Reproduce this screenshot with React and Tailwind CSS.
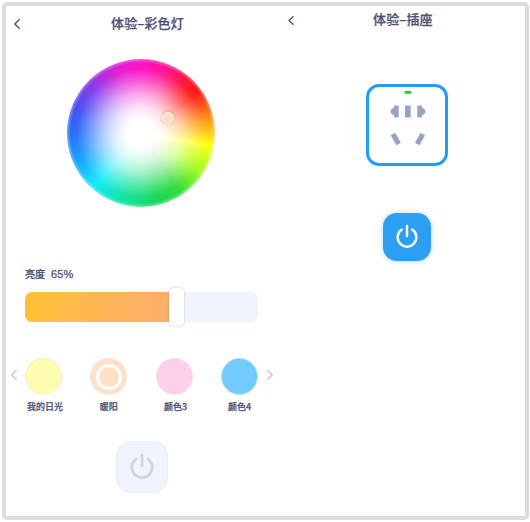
const CJK = "font-['Noto_Sans_CJK_SC',sans-serif]";

function Chevron({ className, right = false, width = 1.5 }) {
  return (
    <svg viewBox="0 0 6 10" className={className} fill="none" stroke="currentColor" strokeWidth={width} strokeLinecap="round" strokeLinejoin="round">
      <path d={right ? "M0.8 0.8 5.2 5 0.8 9.2" : "M5.2 0.8 0.8 5 5.2 9.2"} />
    </svg>
  );
}

function PowerIcon({ className }) {
  return (
    <svg viewBox="0 0 24 26" className={className} fill="none" stroke="currentColor" strokeWidth="2.7" strokeLinecap="round">
      <path d="M12 2v11" />
      <path d="M6.3 6A10.2 10.2 0 1 0 17.7 6" />
    </svg>
  );
}

function ColorWheel() {
  return (
    <div className="relative mt-[17px] mr-[1px] size-[148px] shrink-0 self-center">
      <div className="size-full rounded-full blur-[0.6px] bg-[radial-gradient(circle_closest-side,#fff_0%,#fff_19%,rgba(255,255,255,0.86)_36%,rgba(255,255,255,0.6)_54%,rgba(255,255,255,0.25)_73%,rgba(255,255,255,0.03)_86%,rgba(255,255,255,0)_95%,rgba(255,255,255,0.35)_100%),conic-gradient(#ff10c8_0deg,#ff1289_24deg,#ff1720_46deg,#ff1d15_55deg,#ff9218_78deg,#ffff16_100deg,#9cfb22_124deg,#2fdc3c_147deg,#16d852_165deg,#12e4a0_195deg,#14eafa_222deg,#169dff_248deg,#2670fb_270deg,#4b50f5_292deg,#8c38e8_315deg,#e31cd2_340deg,#ff10c8_360deg)]" />
      <span className="absolute left-[95px] top-[53px] size-[12px] rounded-full border-[1.5px] border-[#fff8f4] bg-[#fddcc5] shadow-[0_0_3px_rgba(140,80,60,0.4)]" />
    </div>
  );
}

function Swatch({ color, label, selected, shift = "" }) {
  return (
    <div className="flex w-[37px] flex-col items-center">
      <div className={`flex size-[37px] items-center justify-center rounded-full border border-[#e8e8e8]/60 ${color}`}>
        {selected && <span className="size-[26px] rounded-full border-[3px] border-white" />}
      </div>
      <span className={`mt-[5px] whitespace-nowrap text-[9px] leading-[13px] font-medium ${shift}`}>{label}</span>
    </div>
  );
}

function LampScreen() {
  return (
    <section className="flex w-[270px] shrink-0 flex-col pr-[18px] pl-[19px]">
      <header className="-ml-[12px] mt-[7px] flex h-[20px] items-center">
        <Chevron className="mt-[2px] ml-[1px] h-[10px] w-[6px]" />
        <h1 className="ml-[91px] whitespace-nowrap text-[13px] leading-[20px] font-medium tracking-[0.15px]">体验–彩色灯</h1>
      </header>
      <div className="flex flex-col pt-[9px]">
        <ColorWheel />
      </div>
      <div className="mt-[59px] flex h-[16px] items-center text-[10px] leading-[16px] font-medium">
        <span>亮度</span>
        <span className="ml-[6px] font-['Liberation_Sans',sans-serif] text-[11px] tracking-[0.1px]">65%</span>
      </div>
      <div className="mt-[6px] flex h-[38px] items-center">
        <div className="h-[30px] w-[144px] rounded-l-[7px] bg-gradient-to-r from-[#ffc02f] to-[#fead6a]" />
        <div className="z-10 h-[38px] w-[15px] rounded-[4px] bg-white shadow-[0_0_2px_rgba(80,90,130,0.45)]" />
        <div className="h-[30px] flex-1 rounded-r-[7px] bg-[#f0f4fd]" />
      </div>
      <div className="mt-[32px] -mr-[15px] -ml-[14px] flex items-start">
        <Chevron width={1.3} className="mt-[12px] h-[10px] w-[6px] text-[#c3c5ca]" />
        <div className="ml-[8px] flex w-[233px] justify-between">
          <Swatch color="bg-[#fffdb0]" label="我的日光" shift="ml-[3px]" />
          <Swatch color="bg-[#ffe0c8]" label="暖阳" selected />
          <Swatch color="bg-[#ffd1e8]" label="颜色3" shift="ml-[3px]" />
          <Swatch color="bg-[#71cbff]" label="颜色4" />
        </div>
        <Chevron right width={1.3} className="mt-[12px] ml-[9px] h-[10px] w-[6px] text-[#c3c5ca]" />
      </div>
      <button className="mt-[28px] flex size-[52px] items-center justify-center self-center rounded-[15px] border border-[#e9edf5] bg-[#f0f4fd] text-[#cfd3db]">
        <PowerIcon className="mb-[2px] h-[26px] w-[24px]" />
      </button>
    </section>
  );
}

function SocketScreen() {
  return (
    <section className="flex flex-1 flex-col">
      <header className="mt-[3px] flex h-[20px] items-center pl-[12px]">
        <Chevron className="mt-[2px] h-[9px] w-[6px]" />
        <h1 className="ml-[79px] whitespace-nowrap text-[13px] leading-[20px] font-medium tracking-[0.15px]">体验–插座</h1>
      </header>
      <div className="mt-[55px] ml-[90px] flex h-[82px] w-[82px] justify-center rounded-[13px] border-3 border-[#259cf3] bg-white">
        <svg viewBox="0 0 76 76" className="h-[76px] w-[76px] shrink-0" fill="#95a4c0">
          <rect x="35.5" y="4" width="7" height="2.8" rx="0.6" fill="#38c434" />
          <path d="M25 18.5h4.7v12H25v-2.200c-2.100-.800-3.500-2-3.500-3.800s1.400-3 3.500-3.800z" />
          <rect x="36" y="18.500" width="5.700" height="12" />
          <path d="M48.300 18.500h4.700v2.200c2.100.8 3.500 2 3.500 3.800s-1.400 3-3.500 3.800v2.200h-4.700z" />
          <rect x="24.200" y="46.300" width="5.200" height="11.400" transform="rotate(-30 26.800 52)" />
          <rect x="48.400" y="46.300" width="5.200" height="11.400" transform="rotate(30 51 52)" />
        </svg>
      </div>
      <button className="mt-[47px] ml-[107px] flex size-[48px] items-center justify-center rounded-[14px] bg-[#2c9ff2] text-white shadow-[0_0_5px_rgba(44,159,242,0.4)]">
        <PowerIcon className="mb-[2px] h-[24px] w-[22px]" />
      </button>
    </section>
  );
}

export default function App() {
  return (
    <div className={`h-[522px] w-[530px] overflow-hidden bg-white p-[2px] text-[#4d5275] [-webkit-text-stroke:0.25px] ${CJK}`}>
      <main className="flex h-[518px] w-[526.5px] overflow-hidden rounded-[5px] border-4 border-[#dcdcdc] bg-[#fefefe]">
        <LampScreen />
        <SocketScreen />
      </main>
    </div>
  );
}
